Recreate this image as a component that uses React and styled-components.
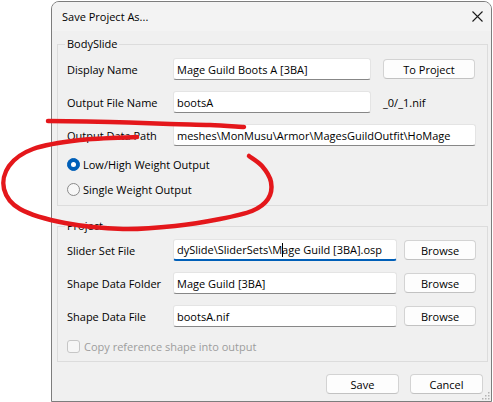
import React from "react";
import styled, { createGlobalStyle } from "styled-components";

const UI_FONT = `"Open Sans", "Noto Sans", "Liberation Sans", sans-serif`;

const GlobalStyle = createGlobalStyle`
  html, body { margin: 0; padding: 0; background: #ffffff; }
  body { font-family: ${UI_FONT}; font-size: 11px; color: #000000; }
  * { box-sizing: border-box; }
`;

const Page = styled.div`
  position: relative;
  width: 493px;
  height: 402px;
  overflow: hidden;
  padding: 1px 0 0 51px;
`;

const Window = styled.div`
  position: relative;
  width: 441px;
  height: 401px;
  border: 1px solid #7d7d7d;
  border-radius: 8px 8px 0 0;
  background: #f0f0f0;
  display: flex;
  flex-direction: column;
  overflow: hidden;
`;

const TitleBar = styled.div`
  height: 29px;
  flex: none;
  display: flex;
  align-items: center;
  justify-content: space-between;
  padding: 0 8px 0 10px;
  background: #f3f3f3;
`;

const TitleText = styled.span`
  font-size: 11px;
  color: #000;
`;

const CloseGlyph = styled.svg`
  width: 11px;
  height: 11px;
  display: block;
`;

const Body = styled.div`
  flex: 1;
  display: flex;
  flex-direction: column;
  padding: 5px 3px 0 5px;
`;

const GroupBox = styled.fieldset`
  margin: ${(p) => p.$mt || 0}px 0 0 0;
  padding: ${(p) => p.$pt}px 10px ${(p) => p.$pb}px 9px;
  border: 1px solid #dcdcdc;
  min-inline-size: 0;
  display: flex;
  flex-direction: column;
`;

const Legend = styled.legend`
  padding: 0 2px;
  margin-left: -2px;
  line-height: 16px;
  font-size: 11px;
  color: #000;
`;

const Rows = styled.div`
  display: flex;
  flex-direction: column;
  gap: 11px;
`;

const Row = styled.div`
  display: flex;
  align-items: center;
  height: 22px;
`;

const Label = styled.span`
  width: 106px;
  flex: none;
  white-space: nowrap;
`;

const Field = styled.div`
  width: ${(p) => p.$w}px;
  height: 22px;
  flex: none;
  display: flex;
  align-items: center;
  padding: 0 3px;
  background: #ffffff;
  border: 1px solid #e4e4e4;
  border-bottom: ${(p) => (p.$focused ? "2px solid #005fb8" : "1px solid #878787")};
  border-radius: 3px;
  white-space: nowrap;
  overflow: hidden;
`;

const Caret = styled.span`
  display: inline-block;
  width: 1px;
  height: 14px;
  background: #000;
  vertical-align: middle;
  margin-right: -1px;
`;

const Button = styled.button`
  width: ${(p) => p.$w}px;
  height: 20px;
  flex: none;
  margin-left: ${(p) => p.$ml || 0}px;
  padding: 0;
  font-family: ${UI_FONT};
  font-size: 11px;
  color: #000;
  background: #fdfdfd;
  border: 1px solid #d3d3d3;
  border-bottom-color: #c2c2c2;
  border-radius: 4px;
`;

const Suffix = styled.span`
  margin-left: 12px;
`;

const ChoiceList = styled.div`
  display: flex;
  flex-direction: column;
  margin-top: 6px;
`;

const Choice = styled.label`
  display: flex;
  align-items: center;
  height: 25px;
  gap: 3px;
  color: ${(p) => (p.$disabled ? "#9d9d9d" : "#000")};
`;

const RadioMark = styled.span`
  width: 13px;
  height: 13px;
  flex: none;
  border-radius: 50%;
  display: flex;
  align-items: center;
  justify-content: center;
  background: ${(p) => (p.$on ? "#005fb8" : "#f7f7f7")};
  border: 1px solid ${(p) => (p.$on ? "#005fb8" : "#8a8a8a")};
  &::after {
    content: "";
    display: ${(p) => (p.$on ? "block" : "none")};
    width: 5px;
    height: 5px;
    border-radius: 50%;
    background: #ffffff;
  }
`;

const CheckRow = styled(Choice)`
  height: 20px;
  margin-top: 9px;
  gap: 4px;
`;

const CheckMark = styled.span`
  width: 13px;
  height: 13px;
  flex: none;
  border-radius: 3px;
  background: #f6f6f6;
  border: 1px solid #c6c6c6;
`;

const Footer = styled.div`
  display: flex;
  justify-content: flex-end;
  gap: 11px;
  padding: 12px 5px 0 0;
`;

const Grip = styled.svg`
  position: absolute;
  right: 1px;
  bottom: 1px;
  width: 9px;
  height: 9px;
`;

const Ink = styled.svg`
  position: absolute;
  left: 0;
  top: 0;
  width: 493px;
  height: 402px;
  pointer-events: none;
`;

/* Smooth freehand stroke through the given points (Catmull-Rom to Bezier). */
function smoothPath(pts) {
  let d = `M ${pts[0][0]} ${pts[0][1]}`;
  for (let i = 0; i < pts.length - 1; i++) {
    const p0 = pts[i - 1] || pts[i];
    const p1 = pts[i];
    const p2 = pts[i + 1];
    const p3 = pts[i + 2] || p2;
    const c1x = p1[0] + (p2[0] - p0[0]) / 6;
    const c1y = p1[1] + (p2[1] - p0[1]) / 6;
    const c2x = p2[0] - (p3[0] - p1[0]) / 6;
    const c2y = p2[1] - (p3[1] - p1[1]) / 6;
    d += ` C ${c1x.toFixed(1)} ${c1y.toFixed(1)} ${c2x.toFixed(1)} ${c2y.toFixed(1)} ${p2[0]} ${p2[1]}`;
  }
  return d;
}

/* Marker strokes: the upper sweep, and the loop that wraps round the weight options. */
const upperSweep = [[48, 121], [110, 122], [170, 124], [210, 125], [244, 127]];
const loop = [
  [249, 156], [262, 166], [271, 182], [268, 199], [252, 211], [220, 219],
  [175, 226], [123, 229], [65, 223], [20, 209], [4, 189], [9, 166],
  [33, 149], [80, 140], [137, 137],
];

export default function App() {
  return (
    <Page>
      <GlobalStyle />
      <Window>
        <TitleBar>
          <TitleText>Save Project As...</TitleText>
          <CloseGlyph viewBox="0 0 11 11">
            <path d="M0.5 0.5 L10.5 10.5 M10.5 0.5 L0.5 10.5" stroke="#1b1b1b" strokeWidth="1.1" fill="none" />
          </CloseGlyph>
        </TitleBar>
        <Body>
          <GroupBox $pt={6} $pb={3}>
            <Legend>BodySlide</Legend>
            <Rows>
              <Row>
                <Label>Display Name</Label>
                <Field $w={198}>Mage Guild Boots A [3BA]</Field>
                <Button $w={92} $ml={12}>To Project</Button>
              </Row>
              <Row>
                <Label>Output File Name</Label>
                <Field $w={198}>bootsA</Field>
                <Suffix>_0/_1.nif</Suffix>
              </Row>
              <Row>
                <Label>Output Data Path</Label>
                <Field $w={303}>meshes\MonMusu\Armor\MagesGuildOutfit\HoMage</Field>
              </Row>
            </Rows>
            <ChoiceList>
              <Choice>
                <RadioMark $on />
                Low/High Weight Output
              </Choice>
              <Choice>
                <RadioMark />
                Single Weight Output
              </Choice>
            </ChoiceList>
          </GroupBox>

          <GroupBox $mt={12} $pt={5} $pb={5}>
            <Legend>Project</Legend>
            <Rows>
              <Row>
                <Label>Slider Set File</Label>
                <Field $w={224} $focused>
                  dySlide\SliderSets\M<Caret />age Guild [3BA].osp
                </Field>
                <Button $w={72} $ml={7}>Browse</Button>
              </Row>
              <Row>
                <Label>Shape Data Folder</Label>
                <Field $w={224}>Mage Guild [3BA]</Field>
                <Button $w={72} $ml={7}>Browse</Button>
              </Row>
              <Row>
                <Label>Shape Data File</Label>
                <Field $w={224}>bootsA.nif</Field>
                <Button $w={72} $ml={7}>Browse</Button>
              </Row>
            </Rows>
            <CheckRow $disabled>
              <CheckMark />
              Copy reference shape into output
            </CheckRow>
          </GroupBox>

          <Footer>
            <Button $w={73}>Save</Button>
            <Button $w={73}>Cancel</Button>
          </Footer>
        </Body>
        <Grip viewBox="0 0 9 9">
          {[[7, 1], [7, 4], [4, 4], [7, 7], [4, 7], [1, 7]].map(([x, y]) => (
            <rect key={`${x}-${y}`} x={x} y={y} width="1.5" height="1.5" fill="#b4b4b4" />
          ))}
        </Grip>
      </Window>
      <Ink viewBox="0 0 493 402">
        <path d={smoothPath(upperSweep)} stroke="#e4171b" strokeWidth="4.5" fill="none" strokeLinecap="round" strokeLinejoin="round" />
        <path d={smoothPath(loop)} stroke="#e4171b" strokeWidth="4.5" fill="none" strokeLinecap="round" strokeLinejoin="round" />
      </Ink>
    </Page>
  );
}
